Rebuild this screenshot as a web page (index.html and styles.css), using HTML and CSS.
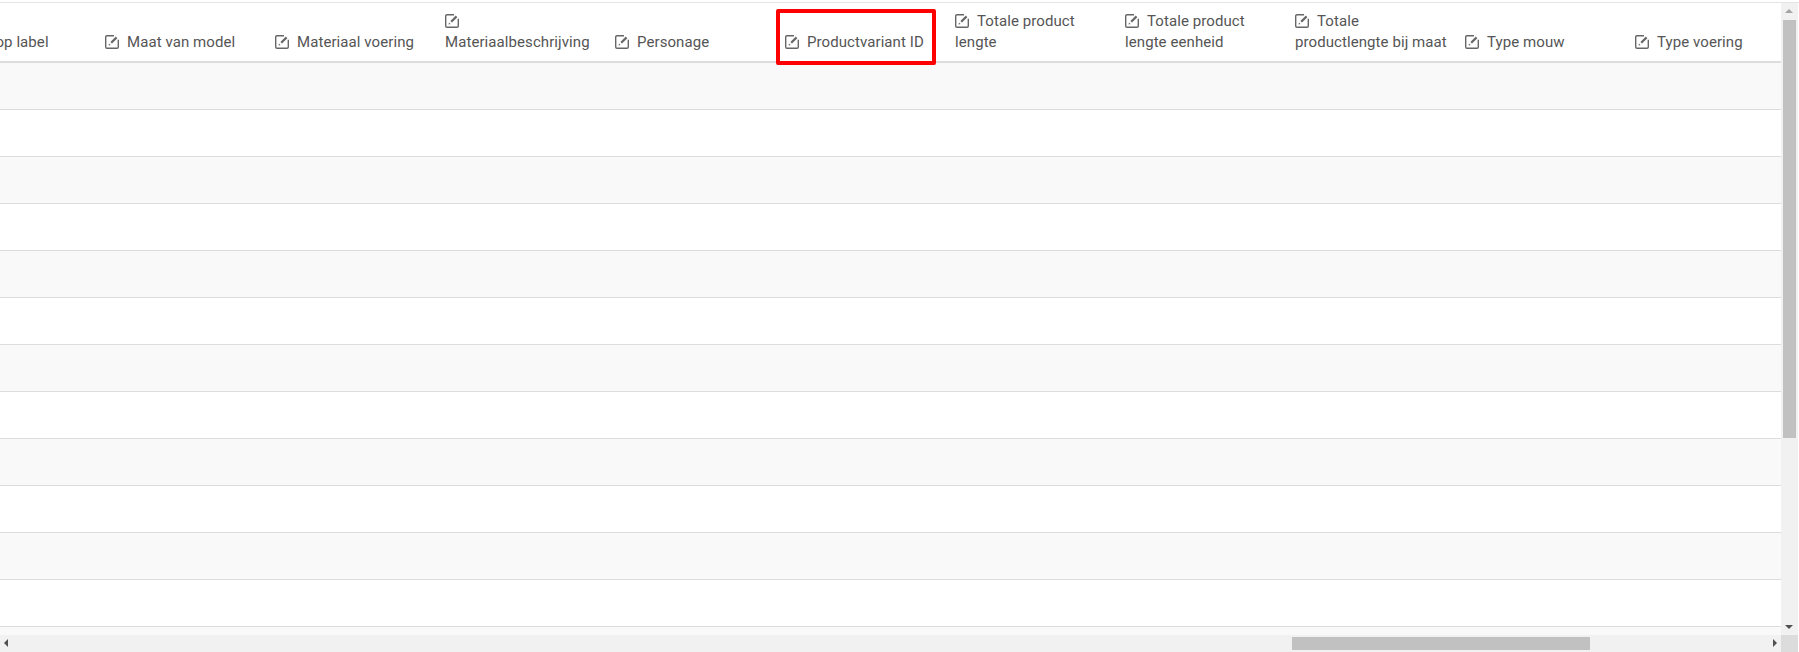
FILE: index.html
```html
<!DOCTYPE html>
<html lang="en">
<head>
    <meta charset="UTF-8">
    <title>Productkenmerken</title>
    <link rel="stylesheet" href="styles.css">
</head>
<body>

<svg class="icon-defs" aria-hidden="true">
    <symbol id="edit" viewBox="0 0 14 14">
        <path class="icon-box" d="M9 .7H2A1.3 1.3 0 0 0 .7 2V12A1.3 1.3 0 0 0 2 13.3H12A1.3 1.3 0 0 0 13.3 12V4.8"/>
        <path class="icon-pen" d="M6.2 7.8L11.6 2.4"/>
        <path d="M3.6 10.4L4 8.4 5.6 10Z"/>
    </symbol>
</svg>

<div class="grid-frame">
    <div class="table-area">
        <table class="data-table">
            <thead>
                <tr>
                    <th><svg class="icon"><use href="#edit"/></svg>Maat op label</th>
                    <th><svg class="icon"><use href="#edit"/></svg>Maat van model</th>
                    <th><svg class="icon"><use href="#edit"/></svg>Materiaal voering</th>
                    <th><svg class="icon"><use href="#edit"/></svg>Materiaalbeschrijving</th>
                    <th><svg class="icon"><use href="#edit"/></svg>Personage</th>
                    <th class="marked"><svg class="icon"><use href="#edit"/></svg>Productvariant ID</th>
                    <th><svg class="icon"><use href="#edit"/></svg>Totale product lengte</th>
                    <th><svg class="icon"><use href="#edit"/></svg>Totale product lengte eenheid</th>
                    <th><svg class="icon"><use href="#edit"/></svg>Totale productlengte bij maat</th>
                    <th><svg class="icon"><use href="#edit"/></svg>Type mouw</th>
                    <th><svg class="icon"><use href="#edit"/></svg>Type voering</th>
                </tr>
            </thead>
            <tbody>
                <tr><td colspan="11"></td></tr>
                <tr><td colspan="11"></td></tr>
                <tr><td colspan="11"></td></tr>
                <tr><td colspan="11"></td></tr>
                <tr><td colspan="11"></td></tr>
                <tr><td colspan="11"></td></tr>
                <tr><td colspan="11"></td></tr>
                <tr><td colspan="11"></td></tr>
                <tr><td colspan="11"></td></tr>
                <tr><td colspan="11"></td></tr>
                <tr><td colspan="11"></td></tr>
                <tr><td colspan="11"></td></tr>
                <tr><td colspan="11"></td></tr>
            </tbody>
        </table>
    </div>

    <div class="scroll-v">
        <span class="arrow arrow-up"></span>
        <div class="thumb-v"></div>
        <span class="arrow arrow-down"></span>
    </div>

    <div class="scroll-h">
        <span class="arrow arrow-left"></span>
        <div class="thumb-h"></div>
        <span class="arrow arrow-right"></span>
    </div>

    <div class="scroll-corner"></div>
</div>

</body>
</html>
```

FILE: styles.css
```css
body {
    margin: 0;
    height: 652px;
    overflow: hidden;
    background-color: #ffffff;
    font-family: Roboto, "Liberation Sans", sans-serif;
}
.icon-defs {
    display: none;
}
.grid-frame {
    display: grid;
    grid-template-columns: 1781px 17px;
    grid-template-rows: 632px 17px;
    margin-top: 2px;
    border-top: 1px solid #e4e4e4;
}
.table-area {
    overflow: hidden;
}
.data-table {
    table-layout: fixed;
    width: 1870px;
    margin-left: -75px;
    border-collapse: collapse;
}
.data-table th {
    position: relative;
    width: 150px;
    height: 59px;
    padding: 0 4px 8px 10px;
    box-sizing: border-box;
    border-bottom: 2px solid #dddddd;
    vertical-align: bottom;
    text-align: left;
    font-size: 15px;
    font-weight: 400;
    letter-spacing: 0.08px;
    line-height: 21px;
    color: #555555;
}
.data-table td {
    height: 46px;
    padding: 0;
    border-bottom: 1px solid #dddddd;
}
.data-table tbody tr:nth-child(odd) {
    background-color: #f9f9f9;
}
.marked::after {
    content: "";
    position: absolute;
    top: 6px;
    left: 1px;
    width: 160px;
    height: 56px;
    box-sizing: border-box;
    border: 4px solid #ff0000;
    border-radius: 2px;
}
.icon {
    display: inline-block;
    width: 14px;
    height: 14px;
    margin-right: 8px;
    vertical-align: -2px;
    fill: #666666;
}
.icon-box {
    fill: none;
    stroke: #666666;
    stroke-width: 1.4;
}
.icon-pen {
    fill: none;
    stroke: #666666;
    stroke-width: 2.2;
}
.scroll-v {
    position: relative;
    display: flex;
    flex-direction: column;
    align-items: center;
    background-color: #f1f1f1;
}
.thumb-v {
    width: 13px;
    height: 418px;
    margin-top: 17px;
    background-color: #c1c1c1;
}
.scroll-h {
    position: relative;
    background-color: #f1f1f1;
}
.thumb-h {
    position: absolute;
    top: 2px;
    left: 1292px;
    width: 298px;
    height: 13px;
    background-color: #c1c1c1;
}
.scroll-corner {
    background-color: #dcdcdc;
}
.arrow {
    position: absolute;
    width: 0;
    height: 0;
    border-style: solid;
    border-color: transparent;
}
.arrow-up {
    top: 6px;
    left: 4px;
    border-width: 0 4px 4px;
    border-bottom-color: #a3a3a3;
}
.arrow-down {
    bottom: 6px;
    left: 4px;
    border-width: 4px 4px 0;
    border-top-color: #505050;
}
.arrow-left {
    top: 4px;
    left: 4px;
    border-width: 4px 4px 4px 0;
    border-right-color: #505050;
}
.arrow-right {
    top: 4px;
    right: 4px;
    border-width: 4px 0 4px 4px;
    border-left-color: #505050;
}
```
